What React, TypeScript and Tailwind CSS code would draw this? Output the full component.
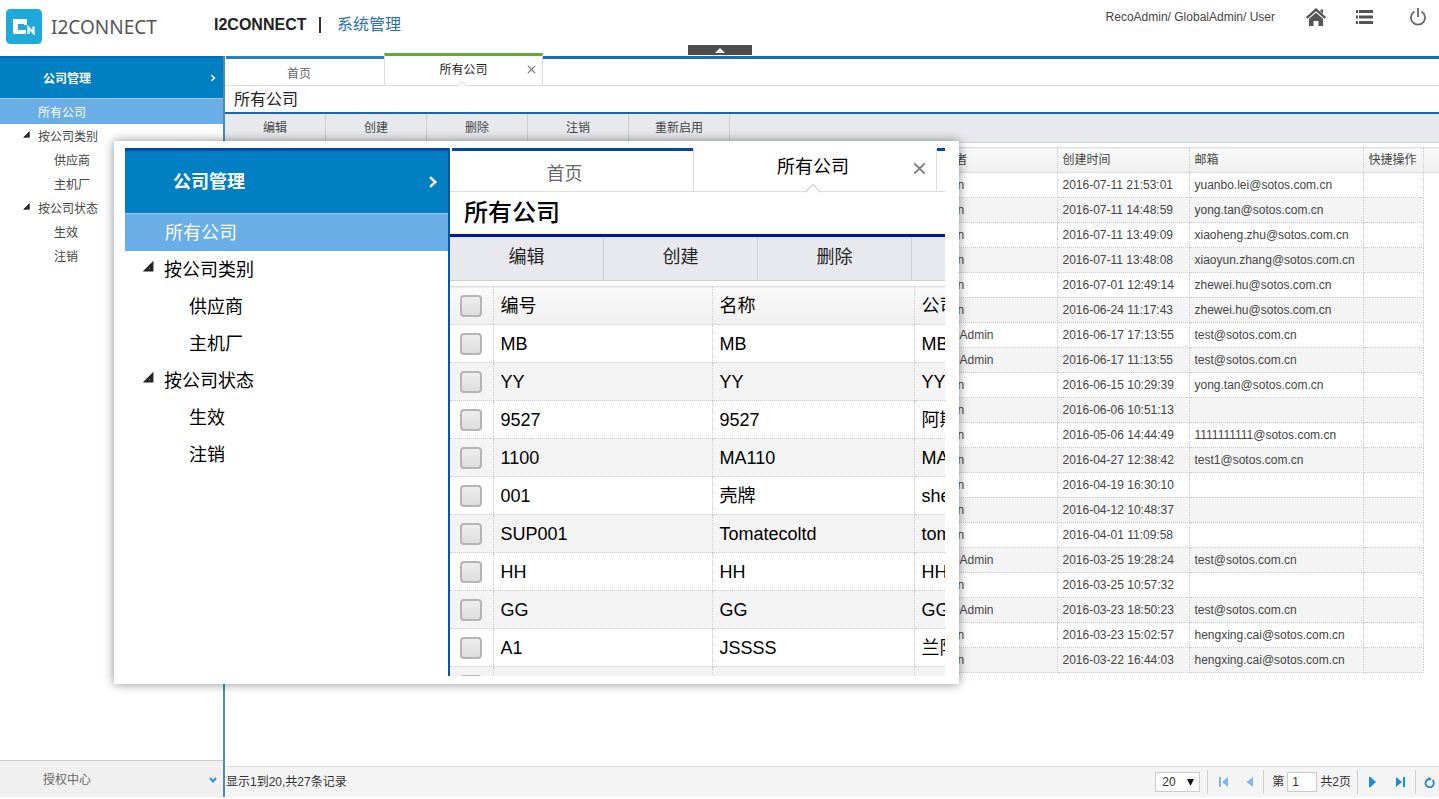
import { clsx } from 'clsx';

type Row = { creator: string; time: string; mail: string };
type Company = { code: string; name: string; full: string };

const rows: Row[] = [
    { creator: 'admin', time: '2016-07-11 21:53:01', mail: 'yuanbo.lei@sotos.com.cn' },
    { creator: 'admin', time: '2016-07-11 14:48:59', mail: 'yong.tan@sotos.com.cn' },
    { creator: 'admin', time: '2016-07-11 13:49:09', mail: 'xiaoheng.zhu@sotos.com.cn' },
    { creator: 'admin', time: '2016-07-11 13:48:08', mail: 'xiaoyun.zhang@sotos.com.cn' },
    { creator: 'admin', time: '2016-07-01 12:49:14', mail: 'zhewei.hu@sotos.com.cn' },
    { creator: 'admin', time: '2016-06-24 11:17:43', mail: 'zhewei.hu@sotos.com.cn' },
    { creator: 'RecoAdmin', time: '2016-06-17 17:13:55', mail: 'test@sotos.com.cn' },
    { creator: 'RecoAdmin', time: '2016-06-17 11:13:55', mail: 'test@sotos.com.cn' },
    { creator: 'admin', time: '2016-06-15 10:29:39', mail: 'yong.tan@sotos.com.cn' },
    { creator: 'admin', time: '2016-06-06 10:51:13', mail: '' },
    { creator: 'admin', time: '2016-05-06 14:44:49', mail: '1111111111@sotos.com.cn' },
    { creator: 'admin', time: '2016-04-27 12:38:42', mail: 'test1@sotos.com.cn' },
    { creator: 'admin', time: '2016-04-19 16:30:10', mail: '' },
    { creator: 'admin', time: '2016-04-12 10:48:37', mail: '' },
    { creator: 'admin', time: '2016-04-01 11:09:58', mail: '' },
    { creator: 'RecoAdmin', time: '2016-03-25 19:28:24', mail: 'test@sotos.com.cn' },
    { creator: 'admin', time: '2016-03-25 10:57:32', mail: '' },
    { creator: 'RecoAdmin', time: '2016-03-23 18:50:23', mail: 'test@sotos.com.cn' },
    { creator: 'admin', time: '2016-03-23 15:02:57', mail: 'hengxing.cai@sotos.com.cn' },
    { creator: 'admin', time: '2016-03-22 16:44:03', mail: 'hengxing.cai@sotos.com.cn' },
];

const companies: Company[] = [
    { code: 'MB', name: 'MB', full: 'MB' },
    { code: 'YY', name: 'YY', full: 'YY' },
    { code: '9527', name: '9527', full: '阿斯' },
    { code: '1100', name: 'MA110', full: 'MA' },
    { code: '001', name: '壳牌', full: 'she' },
    { code: 'SUP001', name: 'Tomatecoltd', full: 'tom' },
    { code: 'HH', name: 'HH', full: 'HH' },
    { code: 'GG', name: 'GG', full: 'GG' },
    { code: 'A1', name: 'JSSSS', full: '兰阳' },
    { code: '', name: '', full: '' },
];

const tree = [
    { label: '按公司类别', parent: true },
    { label: '供应商', parent: false },
    { label: '主机厂', parent: false },
    { label: '按公司状态', parent: true },
    { label: '生效', parent: false },
    { label: '注销', parent: false },
];

// ── Sidebar ──────────────────────────────────────────────────────────────────

const SideMenu = ({ large = false }: { large?: boolean }) => (
    <nav className={large ? 'text-lg text-black' : 'text-xs text-[#444]'}>
        <button
            type="button"
            className={clsx(
                'flex w-full items-center justify-between bg-[#0080c2] font-bold text-white',
                large
                    ? 'h-[65px] border-t-[3px] border-[#0046a8] pr-2.5 pl-12'
                    : 'h-[42px] border-t-2 border-[#0a6ba8] pt-0.5 pr-[7px] pl-[43px]'
            )}
        >
            公司管理
            <svg
                viewBox="0 0 8 10"
                className={large ? 'h-3 w-2.5' : 'mb-0.5 h-2 w-1.5'}
                fill="none"
                stroke="currentColor"
                strokeWidth="2"
                aria-hidden="true"
            >
                <path d="M1.5 1 6 5 1.5 9" />
            </svg>
        </button>
        <a
            href="#all"
            className={clsx(
                'flex items-center border-t border-[#9fc8ea] bg-[#69aee7] text-white',
                large ? 'h-[38px] pl-10' : 'h-[26px] pt-0.5 pl-[38px]'
            )}
        >
            所有公司
        </a>
        <ul>
            {tree.map((t) => (
                <li key={t.label}>
                    <a
                        href="#tree"
                        className={clsx(
                            'flex items-center',
                            large ? 'h-[37px]' : 'h-6 pt-0.5',
                            t.parent
                                ? large ? 'gap-2.5 pl-[18px]' : 'gap-2 pl-[23px]'
                                : large ? 'pl-16' : 'pl-[54px]'
                        )}
                    >
                        {t.parent && (
                            <svg
                                viewBox="0 0 10 10"
                                className={large ? 'mb-1.5 h-[11px] w-[11px]' : 'mb-1.5 h-[7px] w-[7px]'}
                                aria-hidden="true"
                            >
                                <path d="M9 1v8H1z" fill="#222" stroke="#222" />
                                <path d="M6.500 6v1.500H5z" fill="#999" />
                            </svg>
                        )}
                        {t.label}
                    </a>
                </li>
            ))}
        </ul>
    </nav>
);

// ── Tabs, title and toolbar ──────────────────────────────────────────────────

const PanelHead = ({ actions, large = false }: { actions: string[]; large?: boolean }) => (
    <>
        <div
            className={clsx(
                'flex items-start border-b border-[#dcdcdc]',
                large ? 'h-11 pl-0.5 text-lg' : 'h-[30px] pl-px text-xs'
            )}
        >
            <button
                type="button"
                className={clsx(
                    'flex h-full shrink-0 items-center justify-center border-t-[3px] text-[#666]',
                    large ? 'w-[241px] border-[#0046b0] pr-4 pt-1.5' : 'w-[158px] border-[#2c7cc0] pr-3 pt-1'
                )}
            >
                首页
            </button>
            <div
                className={clsx(
                    'relative flex shrink-0 items-center justify-center border-x border-x-[#dcdcdc]',
                    large
                        ? 'h-11 w-[244px] pr-1 pb-1.5 text-black'
                        : '-mt-[3px] h-8 w-[159px] border-t-[3px] border-t-[#67a832] pb-0.5 text-[#222]'
                )}
            >
                <span>所有公司</span>
                <button
                    type="button"
                    aria-label="关闭"
                    className={clsx('absolute', large ? 'right-2.5 top-3.5' : 'right-1.5 top-[9px]')}
                >
                    <svg
                        viewBox="0 0 10 10"
                        className={large ? 'h-[13px] w-[13px]' : 'h-[9px] w-[9px]'}
                        stroke="#777"
                        strokeWidth="1.300"
                    >
                        <path d="m1 1 8 8M9 1 1 9" />
                    </svg>
                </button>
                <svg
                    viewBox="0 0 12 7"
                    className={clsx(
                        'absolute left-1/2 -translate-x-1/2',
                        large ? '-bottom-px -ml-0.5 h-[9px] w-4' : '-bottom-0.5 -ml-0.5 h-1.5 w-2.5'
                    )}
                    fill="white"
                    stroke="#d0d0d0"
                    aria-hidden="true"
                >
                    <path d="M0 6.500 6 .5l6 6" />
                </svg>
            </div>
            <div className={clsx('flex-1 border-t-[3px]', large ? 'border-[#0046b0]' : 'border-[#1270b4]')} />
        </div>
        <h1
            className={clsx(
                'flex items-center',
                large
                    ? 'h-[45px] border-b-[3px] border-[#0014a8] pl-3.5 text-2xl font-medium text-black'
                    : 'h-7 border-b-2 border-[#1568b0] pt-0.5 pl-[9px] text-base text-[#222]'
            )}
        >
            所有公司
        </h1>
        <div
            className={clsx(
                'flex border-b border-[#cfcfd4] bg-[#e8e9ee]',
                large ? 'h-11 text-lg text-[#222]' : 'h-[29px] text-xs text-[#444]'
            )}
        >
            {actions.map((a) => (
                <button
                    key={a}
                    type="button"
                    className={clsx(
                        'shrink-0 border-r border-[#cdced4]',
                        large ? 'w-[154px] pb-1' : 'w-[101px]'
                    )}
                >
                    {a}
                </button>
            ))}
        </div>
    </>
);

// ── Tables ───────────────────────────────────────────────────────────────────

const RecordTable = () => (
    <table className="mt-1 w-full table-fixed border-collapse text-left text-xs text-[#444]">
        <colgroup>
            <col className="w-[701px]" />
            <col className="w-[131px]" />
            <col className="w-[132px]" />
            <col className="w-[174px]" />
            <col className="w-[60px]" />
            <col />
        </colgroup>
        <thead>
            <tr className="h-[25px] border-y border-[#ddd] bg-linear-to-b from-[#fafafa] to-[#f0f0f0] whitespace-nowrap">
                {['', '创建者', '创建时间', '邮箱', '快捷操作'].map((h) => (
                    <th key={h} className="border-r border-dotted border-r-[#ccc] pr-1 pl-[5px] font-normal">{h}</th>
                ))}
                <th />
            </tr>
        </thead>
        <tbody>
            {rows.map((r) => (
                <tr
                    key={r.time}
                    className="h-[25px] whitespace-nowrap even:bg-[#f4f4f4] [&>td]:border-r [&>td]:border-b [&>td]:border-dotted [&>td]:border-[#ccc] [&>td]:pr-1 [&>td]:pl-[5px]"
                >
                    <td />
                    <td>{r.creator}</td>
                    <td>{r.time}</td>
                    <td>{r.mail}</td>
                    <td />
                    <th className="bg-white" />
                </tr>
            ))}
        </tbody>
    </table>
);

const Tick = ({ label }: { label: string }) => (
    <input
        type="checkbox"
        aria-label={label}
        className="mx-auto block h-[22px] w-[22px] appearance-none rounded border-2 border-[#b4b4b4] bg-linear-to-b from-[#eee] to-[#ddd]"
    />
);

const CompanyTable = () => (
    <table className="mt-[5px] w-full table-fixed border-collapse text-left text-lg text-black">
        <colgroup>
            <col className="w-[43px]" />
            <col className="w-[219px]" />
            <col className="w-[202px]" />
            <col />
        </colgroup>
        <thead>
            <tr className="h-[38px] border-y border-[#ddd] bg-linear-to-b from-[#fafafa] to-[#f0f0f0] whitespace-nowrap [&>th:not(:last-child)]:border-r [&>th]:border-dotted [&>th]:border-r-[#ccc]">
                <th><Tick label="全选" /></th>
                <th className="px-[7px] font-normal">编号</th>
                <th className="px-[7px] font-normal">名称</th>
                <th className="px-[7px] font-normal">公司</th>
            </tr>
        </thead>
        <tbody>
            {companies.map((c, i) => (
                <tr
                    key={i}
                    className="h-[38px] whitespace-nowrap even:bg-[#f4f4f4] [&>td]:border-b [&>td]:border-dotted [&>td]:border-[#ccc] [&>td:not(:last-child)]:border-r"
                >
                    <td><Tick label={c.code} /></td>
                    <td className="px-[7px]">{c.code}</td>
                    <td className="px-[7px]">{c.name}</td>
                    <td className="px-[7px]">{c.full}</td>
                </tr>
            ))}
        </tbody>
    </table>
);

// ── Pager ────────────────────────────────────────────────────────────────────

const Divider = () => <span className="h-6 w-px bg-[#ccc]" />;

const Pager = () => (
    <footer className="flex h-[31px] shrink-0 items-center border-t border-[#ddd] bg-[#f4f4f4] text-xs text-[#333]">
        <span className="flex-1 pl-px">显示1到20,共27条记录</span>
        <div className="relative mr-[7px]">
            <select
                aria-label="每页条数"
                className="block h-5 w-[45px] appearance-none border border-[#ccc] bg-white pl-1.5"
            >
                <option>20</option>
            </select>
            <svg viewBox="0 0 7 7" className="pointer-events-none absolute top-[7px] right-1.5 h-[7px] w-[7px]" aria-hidden="true">
                <path d="M0 0h7L3.500 7z" fill="#111" />
            </svg>
        </div>
        <Divider />
        <div className="flex w-[55px] items-center justify-around pl-0.5 text-[#7db8e3]">
            <button type="button" aria-label="首页">
                <svg viewBox="0 0 10 10" className="h-2.5 w-2.5" fill="currentColor">
                    <path d="M0 0h2v10H0zM9 0v10L3 5z" />
                </svg>
            </button>
            <button type="button" aria-label="上一页">
                <svg viewBox="0 0 10 10" className="h-2.5 w-2.5" fill="currentColor">
                    <path d="M8 0v10L1.500 5z" />
                </svg>
            </button>
        </div>
        <Divider />
        <label className="flex items-center gap-[3px] pr-1.5 pl-2">
            第
            <input defaultValue="1" className="h-5 w-[30px] border border-[#ccc] bg-white pl-1" />
            共2页
        </label>
        <Divider />
        <div className="flex w-[57px] items-center justify-around text-[#1c8ce0]">
            <button type="button" aria-label="下一页">
                <svg viewBox="0 0 10 10" className="h-2.5 w-2.5" fill="currentColor">
                    <path d="M2 0h1.500L9 5l-5.500 5H2z" />
                </svg>
            </button>
            <button type="button" aria-label="末页">
                <svg viewBox="0 0 10 10" className="h-2.5 w-2.5" fill="currentColor">
                    <path d="M0 0v10l6-5zM7 0h2v10H7z" />
                </svg>
            </button>
        </div>
        <Divider />
        <button type="button" aria-label="刷新" className="pr-1 pl-2">
            <svg viewBox="0 0 12 12" className="h-[11px] w-[11px]" fill="none" stroke="#2f86c6" strokeWidth="2">
                <path d="M9.200 3.300A4.500 4.500 0 1 1 5.500 2.200" />
                <path d="M5 0v4.500L8.500 2z" fill="#2f86c6" stroke="none" />
            </svg>
        </button>
    </footer>
);

// ── Header ───────────────────────────────────────────────────────────────────

const Header = () => (
    <header className="relative flex h-14 shrink-0 items-start bg-white">
        <svg viewBox="0 0 36 35" className="mt-[9px] ml-1.5 h-[35px] w-9" aria-hidden="true">
            <rect width="36" height="35" rx="4.500" fill="#1fa9d8" />
            <path d="M7 10h14v6h-3v-1h-6v6h8v4H7z" fill="white" />
            <path d="M22.500 25v-6.500l5 5.500v-6.500" fill="none" stroke="white" strokeWidth="2.200" />
        </svg>
        <span className="mt-[13px] ml-[9px] w-[163px] font-['Noto_Sans',sans-serif] text-[19px] leading-7 text-[#555]">
            I2CONNECT
        </span>
        <div className="mt-[13px] flex items-center text-base leading-6">
            <b className="w-[105px] text-[#222]">I2CONNECT</b>
            <span className="mr-4 h-4 w-0.5 bg-[#333]" />
            <a href="#system" className="text-[#2a6fb5]">系统管理</a>
        </div>
        <div className="mt-[7px] ml-auto flex items-center pr-[13px] text-[#444]">
            <span className="mr-[31px] text-xs leading-5">RecoAdmin/ GlobalAdmin/ User</span>
            <button type="button" aria-label="主页" className="mr-[30px]">
                <svg viewBox="0 0 20 18" className="h-[18px] w-5" fill="#555">
                    <path d="m10 0 10 9-1.500 1.700L10 3.200 1.500 10.700 0 9zM14.500 1.500H17v4.200l-2.500-2.200z" />
                    <path d="m10 4.700 7 6V18h-4.500v-5h-5v5H3v-7.300z" />
                </svg>
            </button>
            <button type="button" aria-label="列表" className="mr-[37px]">
                <svg viewBox="0 0 17 14" className="h-3.5 w-[17px]" fill="#555">
                    <path d="M0 0h2v3H0zM3 0h14v3H3zM0 5.500h2v3H0zM3 5.500h14v3H3zM0 11h2v3H0zM3 11h14v3H3z" />
                </svg>
            </button>
            <button type="button" aria-label="退出">
                <svg viewBox="0 0 16 18" className="h-[18px] w-4" fill="none" stroke="#666" strokeWidth="1.800">
                    <path d="M8 0v9M4.500 3.500a7 7 0 1 0 7 0" />
                </svg>
            </button>
        </div>
        <button
            type="button"
            aria-label="收起"
            className="absolute bottom-px left-1/2 flex h-2.5 w-16 -translate-x-1/2 items-center justify-center bg-[#4d4d4d]"
        >
            <svg viewBox="0 0 10 5" className="h-[5px] w-2.5"><path d="m5 0 5 5H0z" fill="white" /></svg>
        </button>
    </header>
);

// ── Page ─────────────────────────────────────────────────────────────────────

const App = () => (
    <div className="relative flex h-screen flex-col overflow-hidden bg-white pb-0.5 font-['Liberation_Sans','Noto_Sans_CJK_SC',sans-serif]">
        <Header />
        <div className="flex min-h-0 flex-1">
            <aside className="flex w-[225px] shrink-0 flex-col justify-between border-r-2 border-[#4a8cb8]">
                <SideMenu />
                <button
                    type="button"
                    className="flex h-[37px] items-center justify-between border-t border-[#ccc] bg-[#f0f0f0] pt-0.5 pr-1.5 pl-[43px] text-xs text-[#666]"
                >
                    授权中心
                    <svg viewBox="0 0 8 6" className="h-1.5 w-2" fill="none" stroke="#2f8fd0" strokeWidth="2" aria-hidden="true">
                        <path d="m1 1 3 3.500L7 1" />
                    </svg>
                </button>
            </aside>
            <main className="flex min-w-0 flex-1 flex-col">
                <PanelHead actions={['编辑', '创建', '删除', '注销', '重新启用']} />
                <div className="min-h-0 flex-1 overflow-hidden">
                    <RecordTable />
                </div>
                <Pager />
            </main>
        </div>

        {/* Magnified preview floating over the page */}
        <section className="absolute top-[141px] left-[114px] h-[543px] w-[845px] bg-white pt-[7px] pr-3.5 pb-2 pl-[11px] shadow-[0_0_10px_rgba(0,0,0,0.45)]">
            <div className="flex h-full overflow-hidden">
                <div className="w-[325px] shrink-0 border-r-2 border-[#0b56a0]">
                    <SideMenu large />
                </div>
                <div className="min-w-0 flex-1 overflow-hidden">
                    <PanelHead large actions={['编辑', '创建', '删除']} />
                    <CompanyTable />
                </div>
            </div>
        </section>
    </div>
);

export default App;
